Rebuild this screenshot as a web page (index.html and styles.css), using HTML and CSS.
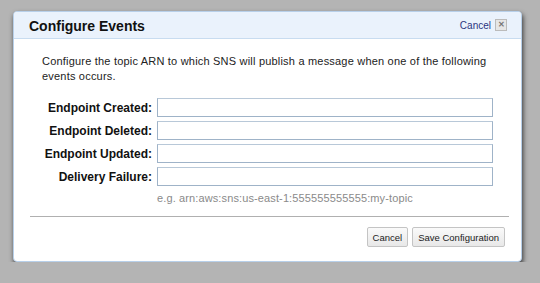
FILE: index.html
```html
<!DOCTYPE html>
<html lang="en">
<head>
    <meta charset="UTF-8">
    <meta name="viewport" content="width=device-width, initial-scale=1.0">
    <title>Configure Events</title>
    <link rel="stylesheet" href="styles.css">
</head>
<body>
    <div class="dialog">
        <div class="dialog-header">
            <h1>Configure Events</h1>
            <div class="header-actions">
                <a href="#" class="cancel-link">Cancel</a>
                <span class="close-box">&#x2715;</span>
            </div>
        </div>

        <div class="dialog-body">
            <p class="intro">Configure the topic ARN to which SNS will publish a message when one of the following events occurs.</p>

            <div class="form-grid">
                <label>Endpoint Created:</label>
                <input type="text" class="field">
                <label>Endpoint Deleted:</label>
                <input type="text" class="field">
                <label>Endpoint Updated:</label>
                <input type="text" class="field">
                <label>Delivery Failure:</label>
                <input type="text" class="field">
                <span></span>
                <span class="hint">e.g. arn:aws:sns:us-east-1:555555555555:my-topic</span>
            </div>

            <div class="divider"></div>

            <div class="buttons">
                <button class="btn">Cancel</button>
                <button class="btn">Save Configuration</button>
            </div>
        </div>
    </div>
</body>
</html>
```

FILE: styles.css
```css
body { margin: 0; padding: 11px 0 0 13px; background: #b4b4b4; font-family: Arial, "Liberation Sans", sans-serif; font-size: 11px; color: #222; }
.dialog { width: 507px; height: 249px; background: #fff; border: 1px solid #b8d0ea; border-radius: 4px; box-shadow: 1px 3px 5px rgba(0,0,0,0.7); overflow: hidden; }
.dialog-header { height: 26px; background: #eaf2fc; border-bottom: 1px solid #c8dcf0; display: flex; align-items: center; justify-content: space-between; padding: 0 14px 0 15px; }
.dialog-header h1 { margin: 1px 0 0; font-size: 14px; font-weight: bold; color: #111; }
.header-actions { display: flex; align-items: center; gap: 4px; }
.cancel-link { color: #2c3580; text-decoration: none; font-size: 10px; }
.close-box { width: 10px; height: 10px; border: 1px solid #bbb; background: #e6e6e6; color: #777; font-size: 8px; line-height: 10px; text-align: center; font-weight: bold; }
.dialog-body { padding: 15px 14px 0 15px; }
.intro { margin: 0 0 14px 13px; line-height: 15px; width: 460px; color: #222; letter-spacing: 0.2px; }
.form-grid { display: grid; grid-template-columns: 123px 336px; column-gap: 5px; row-gap: 4px; align-items: center; }
.form-grid label { text-align: right; font-weight: bold; font-size: 12px; color: #111; }
.field { box-sizing: border-box; width: 336px; height: 19px; margin: 0; border: 1px solid #9fb3c8; border-top-color: #b8c8d8; padding: 1px 3px; font-size: 11px; }
.hint { color: #8a8a8a; font-size: 11px; margin-top: 2px; letter-spacing: 0.12px; }
.divider { border-top: 1px solid #b0b0b0; margin: 12px 0 10px 1px; width: 479px; }
.buttons { display: flex; justify-content: flex-end; gap: 4px; padding-right: 2px; }
.btn { height: 20px; padding: 0 5px; font-family: Arial, "Liberation Sans", sans-serif; font-size: 9.5px; color: #222; border: 1px solid #c4c4c4; border-radius: 2px; background: linear-gradient(#fafafa, #e8e8e8); }
```
